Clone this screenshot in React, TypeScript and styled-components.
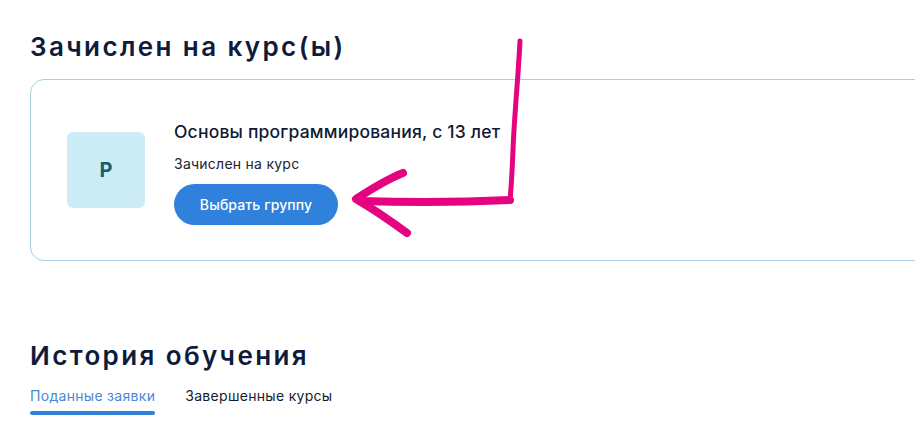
import * as React from "react";
import styled, { createGlobalStyle } from "styled-components";

const GlobalStyle = createGlobalStyle`
  html, body {
    margin: 0;
    padding: 0;
    background: #ffffff;
    overflow: hidden;
  }
  body {
    font-family: Inter, "Noto Sans", sans-serif;
    color: #0f1b3d;
  }
`;

const Page = styled.div`
  position: relative;
  width: 915px;
  height: 440px;
  overflow: hidden;
  padding: 30px 0 0 30px;
  box-sizing: border-box;
`;

const Section = styled.section<{ $top?: number }>`
  display: flex;
  flex-direction: column;
  margin-top: ${(p) => p.$top ?? 0}px;
`;

const Heading = styled.h2`
  margin: 0;
  font-family: Inter, "Noto Sans", sans-serif;
  font-weight: 600;
  font-size: 26px;
  line-height: 34px;
  letter-spacing: 2.4px;
  color: #0f1b3d;
`;

const Card = styled.div`
  margin-top: 15px;
  width: 1100px;
  height: 182px;
  box-sizing: border-box;
  border: 1px solid #a9d0e2;
  border-radius: 14px;
  display: flex;
  align-items: center;
  gap: 29px;
  padding-left: 36px;
`;

const Avatar = styled.div`
  width: 78px;
  height: 76px;
  border-radius: 6px;
  background: #ccedf6;
  color: #1b5d70;
  display: flex;
  align-items: center;
  justify-content: center;
  font-weight: 700;
  font-size: 20px;
  flex-shrink: 0;
`;

const Info = styled.div`
  display: flex;
  flex-direction: column;
  align-items: flex-start;
  padding-top: 6px;
`;

const CourseTitle = styled.div`
  font-size: 17.5px;
  font-weight: 500;
  line-height: 22px;
  letter-spacing: 0.2px;
  color: #101a33;
`;

const Status = styled.div`
  margin-top: 12px;
  font-size: 14px;
  line-height: 18px;
  letter-spacing: 0.25px;
  color: #1a2233;
`;

const PrimaryButton = styled.button`
  margin-top: 11px;
  width: 164px;
  height: 41px;
  border: none;
  border-radius: 21px;
  background: #2f81dc;
  color: #ffffff;
  font-family: Inter, "Noto Sans", sans-serif;
  font-size: 14px;
  font-weight: 500;
  letter-spacing: 0.1px;
  cursor: pointer;
`;

const Tabs = styled.div`
  display: flex;
  gap: 30px;
  margin-top: 14px;
`;

const Tab = styled.div<{ $active?: boolean }>`
  display: flex;
  flex-direction: column;
  font-size: 14px;
  line-height: 18px;
  letter-spacing: 0.3px;
  color: ${(p) => (p.$active ? "#4a89d2" : "#141c30")};

  &::after {
    content: "";
    margin-top: 6px;
    height: 4px;
    border-radius: 2px;
    background: ${(p) => (p.$active ? "#2f80d9" : "transparent")};
  }
`;

const Scribble = styled.svg`
  position: absolute;
  left: 0;
  top: 0;
  pointer-events: none;
`;

export default function App() {
  return (
    <>
      <GlobalStyle />
      <Page>
        <Section>
          <Heading>Зачислен на курс(ы)</Heading>
          <Card>
            <Avatar>P</Avatar>
            <Info>
              <CourseTitle>Основы программирования, с 13 лет</CourseTitle>
              <Status>Зачислен на курс</Status>
              <PrimaryButton>Выбрать группу</PrimaryButton>
            </Info>
          </Card>
        </Section>
        <Section $top={78}>
          <Heading>История обучения</Heading>
          <Tabs>
            <Tab $active>Поданные заявки</Tab>
            <Tab>Завершенные курсы</Tab>
          </Tabs>
        </Section>
        <Scribble width="915" height="440" viewBox="0 0 915 440">
          <g fill="none" stroke="#e5047f" strokeLinecap="round" strokeLinejoin="round">
            <path d="M520 41 C518 80 514 120 513 150 C512 175 511 190 510 200" strokeWidth="5" />
            <path d="M510 200 C470 202 420 203 360 201" strokeWidth="8" />
            <path d="M403 173 C385 180 370 190 356 199 C375 210 392 222 407 233" strokeWidth="8" />
          </g>
        </Scribble>
      </Page>
    </>
  );
}
